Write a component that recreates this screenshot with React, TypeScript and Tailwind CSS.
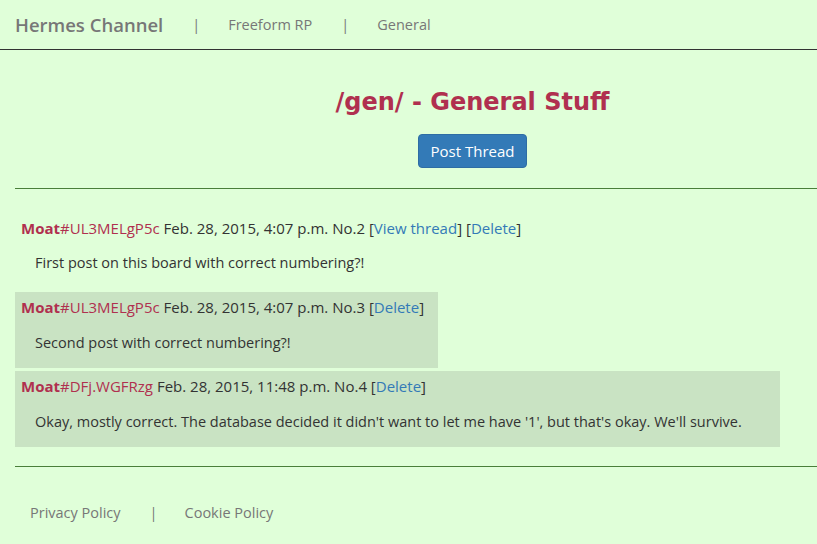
import React from "react";

function Post({
  id,
  date,
  no,
  view,
  text,
  boxed,
  width,
}: {
  id: string;
  date: string;
  no: number;
  view?: boolean;
  text: string;
  boxed?: boolean;
  width?: string;
}) {
  return (
    <div className={`${boxed ? "bg-[#c9e3c3] pb-[15px]" : "pb-[16px]"} ${width ?? ""} pt-[5px] px-[6px]`}>
      <div className="text-[15px] leading-[20px] text-[#333]">
        <span className="font-bold text-[#b0304f]">Moat</span>
        <span className="text-[#b0304f]">#{id}</span> {date} No.{no}{" "}
        {view && (
          <>
            [<span className="text-[#337ab7]">View thread</span>]{" "}
          </>
        )}
        [<span className="text-[#337ab7]">Delete</span>]
      </div>
      <div className={`text-[14.5px] leading-[20px] text-[#333] pl-[14px] ${boxed ? "mt-[16px]" : "mt-[15px]"}`}>
        {text}
      </div>
    </div>
  );
}

export default function App() {
  return (
    <div className="min-h-[544px] w-[817px] bg-[#e0ffd9] overflow-hidden font-['Open_Sans','Liberation_Sans',sans-serif]">
      <nav className="h-[50px] border-b border-[#333] flex items-center px-[15px] text-[#777]">
        <span className="text-[18.5px] font-semibold">Hermes Channel</span>
        <span className="ml-[29px] text-[14.5px]">|</span>
        <span className="ml-[28px] text-[14.5px]">Freeform RP</span>
        <span className="ml-[29px] text-[14.5px]">|</span>
        <span className="ml-[28px] text-[14.5px]">General</span>
      </nav>
      <div className="pl-[128px] flex flex-col items-center">
        <h1 className="mt-[38px] text-[24px] leading-[28px] font-bold text-[#b0304f] font-['DejaVu_Sans',sans-serif]">
          /gen/ - General Stuff
        </h1>
        <button className="mt-[18px] h-[34px] px-[12px] rounded-[4px] bg-[#337ab7] border border-[#2e6da4] text-white text-[15px]">
          Post Thread
        </button>
      </div>
      <div className="ml-[15px] mt-[20px] border-t border-[#4a7f3a]" />
      <div className="ml-[15px] mt-[24px] flex flex-col items-start gap-[3px]">
        <Post id="UL3MELgP5c" date="Feb. 28, 2015, 4:07 p.m." no={2} view text="First post on this board with correct numbering?!" />
        <Post
          boxed
          width="w-[423px]"
          id="UL3MELgP5c"
          date="Feb. 28, 2015, 4:07 p.m."
          no={3}
          text="Second post with correct numbering?!"
        />
        <Post
          boxed
          width="w-[765px]"
          id="DFj.WGFRzg"
          date="Feb. 28, 2015, 11:48 p.m."
          no={4}
          text="Okay, mostly correct. The database decided it didn't want to let me have '1', but that's okay. We'll survive."
        />
      </div>
      <div className="ml-[15px] mt-[19px] border-t border-[#4a7f3a]" />
      <div className="flex items-center px-[30px] mt-[35px] text-[14.5px] text-[#777]">
        <span>Privacy Policy</span>
        <span className="ml-[29px]">|</span>
        <span className="ml-[27px]">Cookie Policy</span>
      </div>
    </div>
  );
}
